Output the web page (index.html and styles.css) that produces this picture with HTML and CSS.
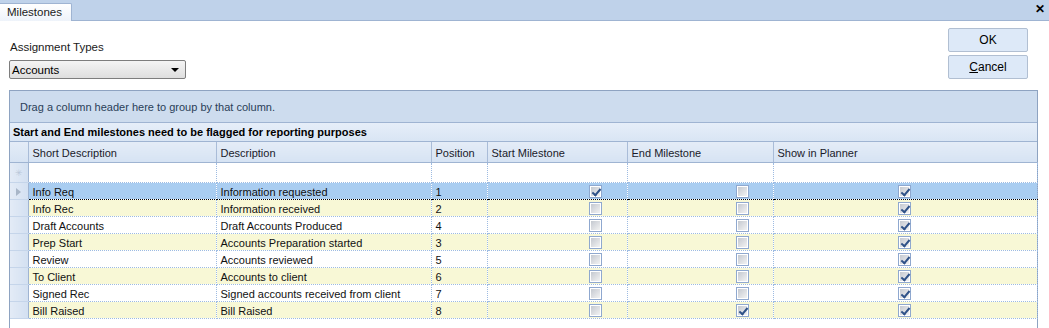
FILE: index.html
```html
<!DOCTYPE html>
<html>
<head>
<meta charset="utf-8">
<link rel="stylesheet" href="styles.css">
</head>
<body>
<div class="tabstrip">
  <div class="tab">Milestones</div>
  <div class="close">✕</div>
</div>
<div class="top">
  <div class="left">
    <div class="label">Assignment Types</div>
    <div class="combo"><span>Accounts</span><span class="arrow"></span></div>
  </div>
  <div class="buttons">
    <div class="btn">OK</div>
    <div class="btn"><u>C</u>ancel</div>
  </div>
</div>
<div class="grid">
  <div class="grouppanel">Drag a column header here to group by that column.</div>
  <div class="caption">Start and End milestones need to be flagged for reporting purposes</div>
  <table class="tbl">
    <colgroup>
      <col class="c-ind"><col class="c-short"><col class="c-desc"><col class="c-pos"><col class="c-start"><col class="c-end"><col class="c-plan">
    </colgroup>
    <thead>
      <tr class="hdr">
        <th class="ind"></th><th>Short Description</th><th>Description</th><th>Position</th><th>Start Milestone</th><th>End Milestone</th><th>Show in Planner</th>
      </tr>
    </thead>
    <tbody>
      <tr class="newrow">
        <td class="ind"><span class="star">✳</span></td><td></td><td></td><td></td><td></td><td></td><td></td>
      </tr>
      <tr class="sel">
        <td class="ind"><span class="tri"></span></td><td>Info Req</td><td>Information requested</td><td>1</td>
        <td class="cs"><span class="cb on"></span></td><td class="ce"><span class="cb"></span></td><td class="cp"><span class="cb on"></span></td>
      </tr>
      <tr class="alt">
        <td class="ind"></td><td>Info Rec</td><td>Information received</td><td>2</td>
        <td class="cs"><span class="cb"></span></td><td class="ce"><span class="cb"></span></td><td class="cp"><span class="cb on"></span></td>
      </tr>
      <tr>
        <td class="ind"></td><td>Draft Accounts</td><td>Draft Accounts Produced</td><td>4</td>
        <td class="cs"><span class="cb"></span></td><td class="ce"><span class="cb"></span></td><td class="cp"><span class="cb on"></span></td>
      </tr>
      <tr class="alt">
        <td class="ind"></td><td>Prep Start</td><td>Accounts Preparation started</td><td>3</td>
        <td class="cs"><span class="cb"></span></td><td class="ce"><span class="cb"></span></td><td class="cp"><span class="cb on"></span></td>
      </tr>
      <tr>
        <td class="ind"></td><td>Review</td><td>Accounts reviewed</td><td>5</td>
        <td class="cs"><span class="cb"></span></td><td class="ce"><span class="cb"></span></td><td class="cp"><span class="cb on"></span></td>
      </tr>
      <tr class="alt">
        <td class="ind"></td><td>To Client</td><td>Accounts to client</td><td>6</td>
        <td class="cs"><span class="cb"></span></td><td class="ce"><span class="cb"></span></td><td class="cp"><span class="cb on"></span></td>
      </tr>
      <tr>
        <td class="ind"></td><td>Signed Rec</td><td>Signed accounts received from client</td><td>7</td>
        <td class="cs"><span class="cb"></span></td><td class="ce"><span class="cb"></span></td><td class="cp"><span class="cb on"></span></td>
      </tr>
      <tr class="alt">
        <td class="ind"></td><td>Bill Raised</td><td>Bill Raised</td><td>8</td>
        <td class="cs"><span class="cb"></span></td><td class="ce"><span class="cb on"></span></td><td class="cp"><span class="cb on"></span></td>
      </tr>
    </tbody>
  </table>
  <div class="empty"></div>
</div>
</body>
</html>
```
FILE: styles.css
```css
* { box-sizing: border-box; }
html, body { margin: 0; padding: 0; }
body {
  width: 1049px;
  height: 328px;
  overflow: hidden;
  background: #fff;
  font-family: "Liberation Sans", Arial, sans-serif;
  font-size: 11px;
  color: #1a1a1a;
}
.tabstrip {
  height: 21px;
  background: #bfd2ea;
  border-bottom: 1px solid #9fb4d2;
  display: flex;
  align-items: flex-end;
  position: relative;
}
.tab {
  height: 18px;
  width: 72px;
  margin-bottom: -1px;
  padding: 2px 0 0 7px;
  background: linear-gradient(#ffffff, #eef3fa);
  border: 1px solid #9fb4d2;
  border-bottom: none;
  border-left: none;
  border-radius: 0 2px 0 0;
  font-size: 11.5px;
}
.close {
  position: absolute;
  right: 4px;
  top: 2px;
  font-size: 12px;
  font-weight: bold;
  color: #000;
}
.top {
  display: flex;
  justify-content: space-between;
  height: 69px;
}
.left {
  padding: 19px 0 0 10px;
}
.label {
  height: 14px;
  line-height: 14px;
  font-size: 11.5px;
}
.combo {
  margin-top: 6px;
  margin-left: -1px;
  width: 177px;
  height: 19px;
  border: 1px solid #7d7d7d;
  border-radius: 2px;
  background: linear-gradient(#f4f4f4, #dedede);
  display: flex;
  align-items: center;
  justify-content: space-between;
  padding: 0 6px 0 2px;
  color: #000;
  font-size: 11.5px;
}
.arrow {
  width: 0; height: 0;
  border-left: 4px solid transparent;
  border-right: 4px solid transparent;
  border-top: 4px solid #000;
}
.buttons {
  padding: 7px 21px 0 0;
  display: flex;
  flex-direction: column;
  gap: 3px;
}
.btn {
  width: 80px;
  height: 24px;
  border: 1px solid #b1bfd2;
  border-radius: 2px;
  background: #dde9f8;
  display: flex;
  align-items: center;
  justify-content: center;
  color: #000;
  font-size: 12px;
}
.grid {
  margin-left: 9px;
  width: 1029px;
  border: 1px solid #8ea3c1;
  border-bottom: none;
  height: 250px;
}
.grouppanel {
  height: 32px;
  background: #cddcee;
  border-bottom: 1px solid #9fb4d2;
  padding: 10px 0 0 10px;
  color: #2a3e58;
}
.caption {
  height: 19px;
  background: linear-gradient(#e6eef9, #d9e5f4);
  border-bottom: 1px solid #9fb4d2;
  font-weight: bold;
  padding: 3px 0 0 3px;
  color: #000;
}
.tbl {
  border-collapse: collapse;
  table-layout: fixed;
  width: 1027px;
}
.c-ind { width: 18px; }
.c-short { width: 188px; }
.c-desc { width: 215px; }
.c-pos { width: 56px; }
.c-start { width: 140px; }
.c-end { width: 146px; }
.c-plan { width: 264px; }
.hdr th {
  height: 20px;
  font-weight: normal;
  text-align: left;
  padding: 2px 0 0 4px;
  background: linear-gradient(#e4ecf7, #d6e3f3);
  border-bottom: 1px solid #9fb4d2;
  border-left: 1px solid #a9bcd8;
  color: #1a1a2a;
  white-space: nowrap;
}
.hdr th.ind { border-left: none; }
td {
  height: 17px;
  padding: 2px 0 0 4px;
  border-right: 1px dotted #9dbbe2;
  border-bottom: 1px dotted #9dbbe2;
  white-space: nowrap;
  overflow: hidden;
  line-height: 14px;
  color: #111;
}
.newrow td { height: 20px; background: #fff; }
td.ind {
  padding: 0;
  background: linear-gradient(90deg, #e3ebf6, #d3e0f1);
  border-right: 1px solid #9fb4d2;
  border-bottom: 1px solid #c5d5ea;
  text-align: center;
}
.star { color: #b9c7d9; font-size: 9px; }
tr.alt td { background: #f8f8d6; }
tr.alt td.ind, tr.sel td.ind { background: linear-gradient(90deg, #e3ebf6, #d3e0f1); }
tr.sel td {
  background: #a9cdf1;
  border-top: 1px dotted #000;
  border-bottom: 1px dotted #000;
}
tr.sel td.ind { border-top: 1px solid #c5d5ea; border-bottom: 1px solid #c5d5ea; }
.tri {
  display: inline-block;
  width: 0; height: 0;
  border-top: 4px solid transparent;
  border-bottom: 4px solid transparent;
  border-left: 5px solid #a8b6c8;
  vertical-align: middle;
}
td.cs, td.ce, td.cp { padding-top: 0; }
td.cs { padding-left: 101px; }
td.ce { padding-left: 108px; }
td.cp { padding-left: 124px; }
.cb {
  display: inline-block;
  width: 13px;
  height: 13px;
  border: 1px solid #8fa8cf;
  background: linear-gradient(135deg, #bfc4cc, #f7f7f7);
  vertical-align: middle;
  position: relative;
  box-shadow: inset 0 0 0 1px #ffffff;
}
.cb.on::after {
  content: "";
  position: absolute;
  left: 4px;
  top: 1px;
  width: 3px;
  height: 7px;
  border-right: 2px solid #2f5288;
  border-bottom: 2px solid #2f5288;
  transform: rotate(40deg);
}
.empty { height: 20px; }
```
